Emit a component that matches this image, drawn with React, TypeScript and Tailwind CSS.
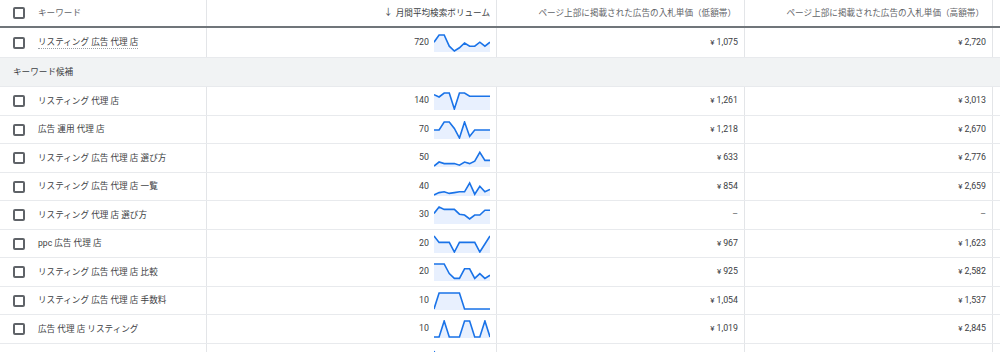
import React from "react";

const FONT = { fontFamily: '"Roboto", "Noto Sans CJK JP", sans-serif' };

type Row = { kw: string; vol: string; low: string; high: string; spark: number[]; dotted?: boolean };

const top: Row = {
  kw: "リスティング 広告 代理 店",
  vol: "720",
  low: "1,075",
  high: "2,720",
  spark: [0.55, 1, 1, 0.3, 0, 0.2, 0.5, 0.3, 0.3, 0.55, 0.3, 0.55],
  dotted: true,
};

const rows: Row[] = [
  { kw: "リスティング 代理 店", vol: "140", low: "1,261", high: "3,013", spark: [0.9, 0.75, 1, 1, 0, 1, 1, 0.8, 0.8, 0.8, 0.8, 0.8] },
  { kw: "広告 運用 代理 店", vol: "70", low: "1,218", high: "2,670", spark: [0.5, 0.5, 1, 1, 0.6, 0, 1, 0.1, 0.5, 0.5, 0.5, 0.5] },
  { kw: "リスティング 広告 代理 店 選び方", vol: "50", low: "633", high: "2,776", spark: [0, 0.25, 0.15, 0.15, 0.15, 0.05, 0.25, 0.15, 0.3, 0.85, 0.35, 0.35] },
  { kw: "リスティング 広告 代理 店 一覧", vol: "40", low: "854", high: "2,659", spark: [0, 0.15, 0.2, 0.1, 0.15, 0.2, 0.2, 0.75, 0.05, 0.55, 0.2, 0.35] },
  { kw: "リスティング 代理 店 選び方", vol: "30", low: "", high: "", spark: [0.6, 1, 0.85, 0.85, 0.85, 0.55, 0.5, 0.25, 0.5, 0.5, 0.8, 0.8] },
  { kw: "ppc 広告 代理 店", vol: "20", low: "967", high: "1,623", spark: [1, 0.6, 0.6, 0.6, 0, 0.6, 0.6, 0.6, 0.6, 0, 0.5, 1] },
  { kw: "リスティング 広告 代理 店 比較", vol: "20", low: "925", high: "2,582", spark: [1, 1, 1, 0.4, 0.1, 0.1, 0.7, 0.7, 0.1, 0.4, 0.1, 0.3] },
  { kw: "リスティング 広告 代理 店 手数料", vol: "10", low: "1,054", high: "1,537", spark: [0, 1, 1, 1, 1, 1, 0, 0, 0, 0, 0, 0] },
  { kw: "広告 代理 店 リスティング", vol: "10", low: "1,019", high: "2,845", spark: [0, 0, 1, 0, 0, 0, 1, 1, 0, 0, 1, 0] },
];

function Spark({ data }: { data: number[] }) {
  const w = 56;
  const h = 18;
  const step = w / (data.length - 1);
  const pts = data.map((v, i) => [i * step, 1 + (1 - v) * (h - 2)]);
  const line = pts.map((p, i) => `${i ? "L" : "M"}${p[0].toFixed(2)} ${p[1].toFixed(2)}`).join(" ");
  const area = `${line} L${w} ${h} L0 ${h} Z`;
  return (
    <svg width={w} height={h} viewBox={`0 0 ${w} ${h}`} className="block shrink-0">
      <path d={area} fill="#e8f0fe" />
      <path d={line} fill="none" stroke="#1a73e8" strokeWidth={1.6} strokeLinejoin="miter" />
    </svg>
  );
}

function Checkbox() {
  return <div className="w-[12px] h-[12px] border-2 border-[#5f6368] rounded-[2px] shrink-0" />;
}

function Price({ v }: { v: string }) {
  if (!v) return <span className="text-[#5f6368]">–</span>;
  return (
    <span>
      <span className="mr-[2px] text-[8px]">¥</span>
      {v}
    </span>
  );
}

function DataRow({ r, h }: { r: Row; h: string }) {
  return (
    <div className={`grid grid-cols-[207px_290px_248px_248px_1fr] border-b border-[#e8eaed] ${h}`}>
      <div className="flex items-center border-r border-[#e3e5e8] pl-[13px]">
        <Checkbox />
        <span
          className={`ml-[13px] text-[8.6px] text-[#3c4043] whitespace-nowrap ${r.dotted ? "border-b border-dotted border-[#9aa0a6] leading-[12px]" : ""}`}
        >
          {r.kw}
        </span>
      </div>
      <div className="flex items-center justify-end border-r border-[#e3e5e8] pr-[6px]">
        <span className="text-[8.8px] text-[#3c4043] mr-[5px]">{r.vol}</span>
        <Spark data={r.spark} />
      </div>
      <div className="flex items-center justify-end border-r border-[#e3e5e8] pr-[6px] text-[8.8px] text-[#3c4043]">
        <Price v={r.low} />
      </div>
      <div className="flex items-center justify-end border-r border-[#e3e5e8] pr-[6px] text-[8.8px] text-[#3c4043]">
        <Price v={r.high} />
      </div>
      <div />
    </div>
  );
}

export default function App() {
  const hs = ["h-[29px]", "h-[28px]", "h-[29px]", "h-[28px]", "h-[29px]", "h-[28px]", "h-[29px]", "h-[28px]", "h-[29px]"];
  return (
    <div className="w-[1000px] h-[352px] overflow-hidden bg-white" style={FONT}>
      <div className="grid grid-cols-[207px_290px_248px_248px_1fr] h-[28px] border-b-2 border-[#70757a]">
        <div className="flex items-center border-r border-[#e3e5e8] pl-[13px]">
          <Checkbox />
          <span className="ml-[13px] text-[8.6px] text-[#5f6368]">キーワード</span>
        </div>
        <div className="flex items-center justify-end border-r border-[#e3e5e8] pr-[6px] text-[8.6px] text-[#3c4043]">
          <span className="mr-[3px] text-[9px]">↓</span>
          月間平均検索ボリューム
        </div>
        <div className="flex items-center justify-end border-r border-[#e3e5e8] pr-[8px] text-[8.6px] text-[#5f6368]">
          ページ上部に掲載された広告の入札単価（低額帯）
        </div>
        <div className="flex items-center justify-end border-r border-[#e3e5e8] pr-[8px] text-[8.6px] text-[#5f6368]">
          ページ上部に掲載された広告の入札単価（高額帯）
        </div>
        <div />
      </div>
      <DataRow r={top} h="h-[30px]" />
      <div className="h-[29px] bg-[#f1f3f4] border-b border-[#e8eaed] flex items-center pl-[13px] text-[8.6px] text-[#3c4043]">
        キーワード候補
      </div>
      {rows.map((r, i) => (
        <DataRow key={i} r={r} h={hs[i]} />
      ))}
      <div className="grid grid-cols-[207px_290px_248px_248px_1fr] h-[29px]">
        <div className="border-r border-[#e3e5e8]" />
        <div className="flex items-center justify-end border-r border-[#e3e5e8] pr-[6px]">
          <Spark data={[1, 0.2, 0.3, 0.2, 0.4, 0.2, 0.3, 0.2, 0.3, 0.2, 0.3, 0.2]} />
        </div>
        <div className="border-r border-[#e3e5e8]" />
        <div className="border-r border-[#e3e5e8]" />
        <div />
      </div>
    </div>
  );
}
